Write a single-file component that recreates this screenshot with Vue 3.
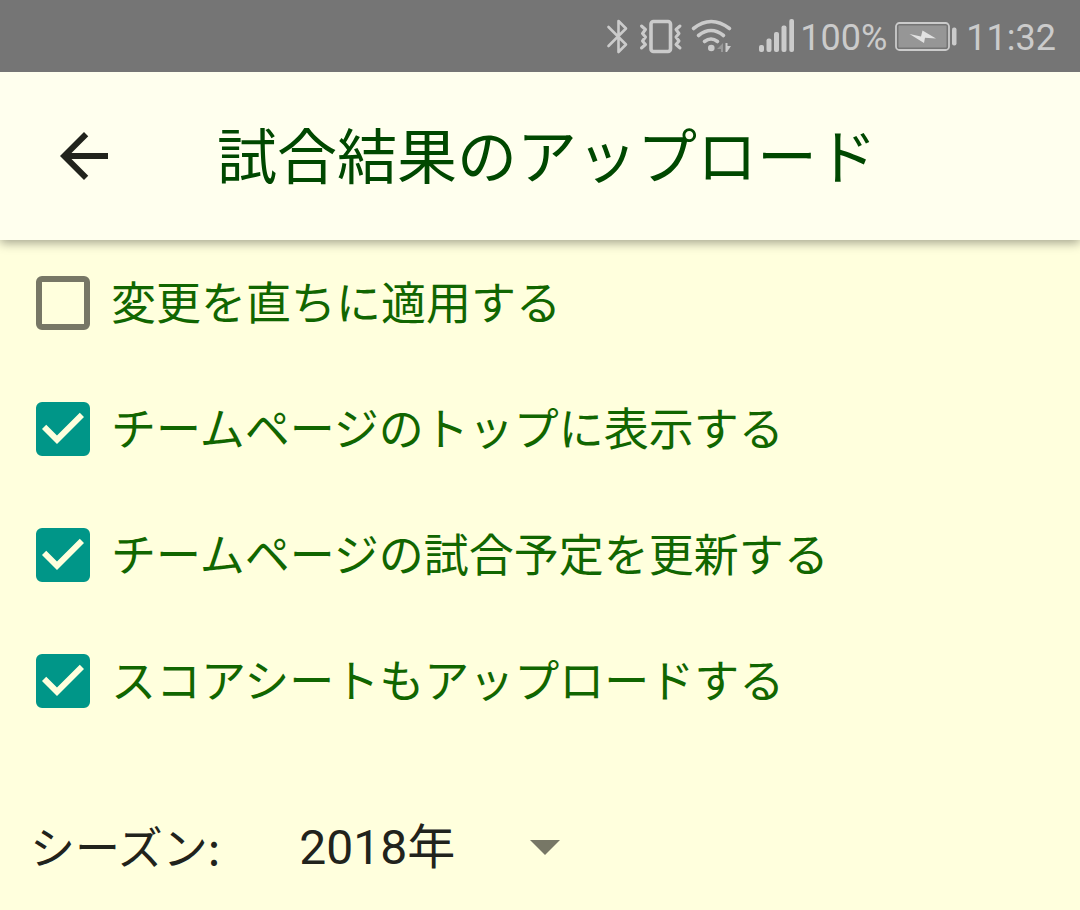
<script setup>
import { ref } from 'vue'

const options = ref([
  { id: 'apply', label: '変更を直ちに適用する', checked: false },
  { id: 'top', label: 'チームページのトップに表示する', checked: true },
  { id: 'schedule', label: 'チームページの試合予定を更新する', checked: true },
  { id: 'sheet', label: 'スコアシートもアップロードする', checked: true },
])
const season = ref('2018年')
</script>

<template>
  <div class="screen">
    <div class="status">
      <svg class="radio-icons" width="200" height="48" viewBox="600 12 200 48" aria-hidden="true">
        <g fill="none" stroke="#cbcbcb" stroke-linecap="round" stroke-linejoin="round">
          <path stroke-width="2.6" d="M608.5 27 626 44.5 618.5 52V21L626 28.5 608.5 46" />
          <rect x="651" y="21.5" width="19.5" height="30" rx="2.5" stroke-width="3.6" />
          <path stroke-width="3" d="M641.5 26l4 3.5-3 4 3 3.5-3 4 3 3.5-4 3.5M680 26l-4 3.5 3 4-3 3.5 3 4-3 3.5 4 3.5" />
          <path stroke-width="3.6" d="M693.5 28.5Q711 14.5 729.5 28.5M698.5 35.5Q711 25.5 723.5 35.5M704.5 41.5Q711 36.5 717.5 41.5" />
        </g>
        <circle cx="711.3" cy="48" r="3.3" fill="#cbcbcb" />
        <path fill="#999" d="M723 43v9h-2v-3h-4z" />
        <path fill="#cbcbcb" d="M725.5 43h2v3h3.5l-4 6h-1.5z" />
        <g fill="#cbcbcb">
          <rect x="759" y="45" width="5" height="7" rx="2" />
          <rect x="766.5" y="38.5" width="5" height="13.5" rx="2" />
          <rect x="774" y="32" width="5" height="20" rx="2" />
          <rect x="781.5" y="25.5" width="5" height="26.5" rx="2" />
          <rect x="789.3" y="19" width="4.7" height="33" rx="2" />
        </g>
      </svg>
      <span class="percent">100%</span>
      <svg class="battery" width="62" height="30" viewBox="895 22 62 30" aria-hidden="true">
        <rect x="896" y="23" width="53" height="27" rx="3.5" fill="none" stroke="#cbcbcb" stroke-width="1.8" />
        <rect x="898.5" y="25.5" width="48" height="22" rx="1" fill="#969696" />
        <rect x="952" y="27.5" width="4.5" height="18" rx="2" fill="#cbcbcb" />
        <path fill="#e2e2e2" d="M909.5 34 921 36.5 922.5 30.5 936 38.5 925 37.7 924 43z" />
      </svg>
      <span class="clock">11:32</span>
    </div>

    <header class="bar">
      <button class="back" type="button" aria-label="戻る">
        <svg width="72" height="72" viewBox="0 0 24 24" fill="#21231c">
          <path d="M20 11H7.83l5.59-5.59L12 4l-8 8 8 8 1.41-1.41L7.83 13H20z" />
        </svg>
      </button>
      <h1>試合結果のアップロード</h1>
    </header>

    <main>
      <label v-for="o in options" :key="o.id" class="option" :for="o.id">
        <span class="box">
          <input :id="o.id" v-model="o.checked" type="checkbox" />
          <svg v-if="o.checked" class="tick" viewBox="3 3 18 18" fill="#ffffdd" aria-hidden="true">
            <path d="M10 17l-5-5 1.41-1.41L10 14.17l7.59-7.59L19 8z" />
          </svg>
        </span>
        <span class="text">{{ o.label }}</span>
      </label>

      <div class="season">
        <label class="season-label" for="season">シーズン:</label>
        <span class="picker">
          <select id="season" v-model="season">
            <option>2018年</option>
          </select>
          <svg class="caret" width="30" height="15" viewBox="0 0 30 15" fill="#777766" aria-hidden="true">
            <path d="M0 0h30L15 15z" />
          </svg>
        </span>
      </div>
    </main>
  </div>
</template>

<style>
body {
  margin: 0;
  background: #ffffdd;
}
</style>

<style scoped>
.screen {
  min-height: 100vh;
  background: #ffffdd;
  font-family: Roboto, "Noto Sans CJK JP", sans-serif;
  color: #21231c;
}
.status {
  position: relative;
  z-index: 1;
  display: flex;
  align-items: center;
  justify-content: flex-end;
  height: 72px;
  padding-right: 24px;
  background: #757575;
  color: #cbcbcb;
  font-size: 36px;
  line-height: 48px;
}
.percent {
  padding-top: 4px;
}
.battery {
  margin: 2px 9px 0 8px;
}
.clock {
  padding-top: 4px;
}
.bar {
  position: relative;
  display: flex;
  align-items: center;
  height: 168px;
  padding-left: 48px;
  background: #ffffee;
  box-shadow: 0 3px 10px rgba(0, 0, 0, 0.36);
}
.back {
  display: flex;
  padding: 0;
  border: 0;
  background: none;
}
h1 {
  margin: 0 0 0 97px;
  padding-top: 6px;
  color: #004800;
  font-size: 60px;
  font-weight: 400;
  line-height: 84px;
  white-space: nowrap;
}
.option {
  display: flex;
  align-items: center;
  gap: 21px;
  min-height: 126px;
  padding-left: 36px;
  color: #116600;
  font-size: 45px;
  line-height: 60px;
}
.text {
  padding-top: 4px;
}
.box {
  position: relative;
  display: flex;
}
input {
  appearance: none;
  box-sizing: border-box;
  width: 54px;
  height: 54px;
  margin: 0;
  border: 6px solid #777766;
  border-radius: 6px;
}
input:checked {
  border-color: #009688;
  background: #009688;
}
.tick {
  position: absolute;
  inset: 0;
  pointer-events: none;
}
.season {
  display: flex;
  align-items: center;
  min-height: 126px;
  margin-top: 40px;
  padding-left: 30px;
  font-size: 45px;
  line-height: 60px;
}
.season-label {
  padding-bottom: 2px;
  font-family: "Noto Sans CJK JP", sans-serif;
}
.picker {
  position: relative;
  display: flex;
  align-items: center;
  margin-left: 79px;
}
select {
  appearance: none;
  width: 264px;
  height: 72px;
  padding: 0;
  border: 0;
  background: none;
  color: inherit;
  font-family: inherit;
  font-size: 48px;
}
.caret {
  position: absolute;
  right: 3px;
  pointer-events: none;
}
</style>
